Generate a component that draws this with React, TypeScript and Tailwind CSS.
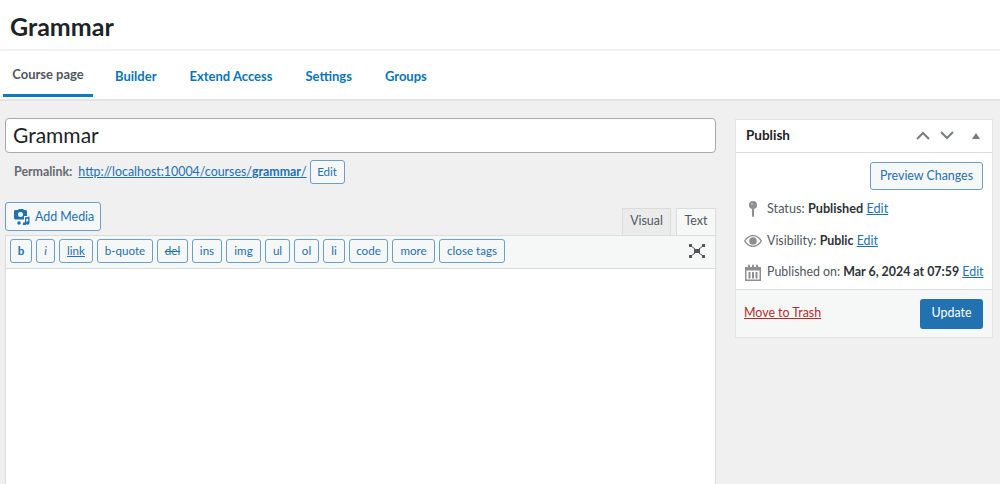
import React from "react";

const quicktags = [
  { label: "b", cls: "font-bold w-[22px]" },
  { label: "i", cls: "italic w-[19px]" },
  { label: "link", cls: "underline w-[34px]" },
  { label: "b-quote", cls: "w-[56px]" },
  { label: "del", cls: "line-through w-[31px]" },
  { label: "ins", cls: "w-[30px]" },
  { label: "img", cls: "w-[35px]" },
  { label: "ul", cls: "w-[25px]" },
  { label: "ol", cls: "w-[25px]" },
  { label: "li", cls: "w-[22px]" },
  { label: "code", cls: "w-[39px]" },
  { label: "more", cls: "w-[43px]" },
  { label: "close tags", cls: "w-[66px]" },
];

const tabs = ["Builder", "Extend Access", "Settings", "Groups"];

function PinIcon() {
  return (
    <svg width="14" height="18" viewBox="0 0 14 18" className="text-[#8c8f94]" fill="currentColor">
      <circle cx="7" cy="5" r="4" />
      <rect x="6" y="8" width="2" height="9" rx="1" />
      <circle cx="6" cy="4" r="1" fill="#c3c4c7" />
    </svg>
  );
}

function EyeIcon() {
  return (
    <svg width="18" height="12" viewBox="0 0 18 12" className="text-[#8c8f94]" fill="currentColor">
      <path d="M9 0C5 0 2 2.500 0 6c2 3.500 5 6 9 6s7-2.500 9-6c-2-3.500-5-6-9-6zm0 10.700C6 10.700 3.400 8.900 1.500 6 3.400 3.100 6 1.300 9 1.300s5.600 1.800 7.500 4.700C14.600 8.900 12 10.700 9 10.700z" fillRule="evenodd" />
      <circle cx="9" cy="6" r="3.800" />
    </svg>
  );
}

function CalendarIcon() {
  return (
    <svg width="16" height="17" viewBox="0 0 16 17" className="shrink-0 text-[#8c8f94]" fill="currentColor">
      <path d="M0 3h16v14H0zM1.500 6.500v9h13v-9z" fillRule="evenodd" />
      <rect x="3" y="0.500" width="2" height="4" rx="1" />
      <rect x="7" y="0.500" width="2" height="4" rx="1" />
      <rect x="11" y="0.500" width="2" height="4" rx="1" />
      <rect x="3.500" y="8" width="2" height="6.500" />
      <rect x="7" y="8" width="2" height="6.500" />
      <rect x="10.500" y="8" width="2" height="6.500" />
    </svg>
  );
}

function MediaIcon() {
  return (
    <svg width="16" height="16" viewBox="0 0 16 16" className="shrink-0" fill="#2271b1">
      <path d="M2 1h2l1-1h4l1 1h1.500A1.500 1.500 0 0 1 13 2.500V7h-3v3.500H1.500A1.500 1.500 0 0 1 0 9V2.500A1.500 1.500 0 0 1 2 1zm4.500 2a2.500 2.500 0 1 0 0 5 2.500 2.500 0 0 0 0-5z" fillRule="evenodd" />
      <path d="M11 8.500l4.500-1V14a1.700 1.700 0 1 1-1.300-1.600V9.400l-2 .5V15a1.700 1.700 0 1 1-1.200-1.600z" />
      <circle cx="5" cy="14" r="1.800" />
    </svg>
  );
}

function FullscreenIcon() {
  return (
    <svg width="16" height="14" viewBox="0 0 16 14" fill="#50575e">
      <rect x="5" y="5" width="6" height="4" />
      <path d="M2 2l4 3M14 2l-4 3M2 12l4-3M14 12l-4-3" stroke="#50575e" strokeWidth="1" fill="none" />
      <rect x="0" y="0" width="3" height="3" />
      <rect x="13" y="0" width="3" height="3" />
      <rect x="0" y="11" width="3" height="3" />
      <rect x="13" y="11" width="3" height="3" />
    </svg>
  );
}

export default function App() {
  return (
    <div className="h-[484px] overflow-hidden bg-[#f0f0f1] text-[#50575e] text-[12.400px] font-['Lato',sans-serif]">
      {/* Header */}
      <div className="bg-white border-b-2 border-[#e4e4e6] h-[101px] flex flex-col">
        <div className="h-[51px] pl-[10px] flex items-center border-b-2 border-[#f2f2f2]">
          <h1 className="text-[25px] font-bold text-[#1d2327] leading-none pt-[3px]">Grammar</h1>
        </div>
        <nav className="flex flex-1 font-bold text-[13px] text-[#0a75b8]">
          <div className="w-[90px] ml-[3px] h-[46px] pt-[5px] flex items-center justify-center border-b-[3px] border-[#0a7cc0] text-[#50575e]">
            Course page
          </div>
          <div className="flex gap-[33px] ml-[22px] h-[46px] pt-[5px] items-center">
            {tabs.map((t) => (
              <span key={t}>{t}</span>
            ))}
          </div>
        </nav>
      </div>

      <div className="flex pl-[5px] pr-[7px] pt-[17px] gap-[19px]">
        {/* Left column */}
        <div className="w-[711px]">
          <div className="h-[35px] bg-white border border-[#a7aaad] rounded flex items-center px-[7px] pb-px text-[21px] text-[#1d2327]">
            Grammar
          </div>
          <div className="flex items-center h-[26px] mt-[6px] pl-[9px]">
            <b className="text-[#646970] mr-[6px]">Permalink:</b>
            <a className="underline text-[#2271b1]">
              http://localhost:10004/courses/<b>grammar</b>/
            </a>
            <span className="ml-[3px] h-[24px] w-[35px] flex items-center justify-center border border-[#6a9fc9] rounded-[3px] bg-[#f6f7f7] text-[#2271b1] text-[11.500px]">
              Edit
            </span>
          </div>

          <div className="flex items-end justify-between mt-[17px]">
            <button className="flex items-center gap-[5px] h-[29px] w-[96px] pl-[8px] pt-px mb-[4px] whitespace-nowrap border border-[#6a9fc9] rounded-[3px] bg-[#f6f7f7] text-[#2271b1]">
              <MediaIcon />
              Add Media
            </button>
            <div className="flex gap-[5px] text-[#50575e]">
              <span className="w-[49px] h-[27px] pb-[2px] flex items-center justify-center bg-[#ebebec] border border-[#dcdcde] border-b-0">Visual</span>
              <span className="w-[40px] h-[27px] pb-[2px] flex items-center justify-center bg-[#f6f7f7] border border-[#dcdcde] border-b-0">Text</span>
            </div>
          </div>

          <div className="border border-[#dcdcde] bg-white h-[300px]">
            <div className="h-[33px] bg-[#f6f7f7] border-b border-[#dcdcde] flex items-start pt-[3px] pl-[4px] pr-[10px]">
              <div className="flex gap-[4px]">
                {quicktags.map((q) => (
                  <span
                    key={q.label}
                    className={`h-[24px] flex items-center justify-center border border-[#6a9fc9] rounded-[3px] bg-[#f6f7f7] text-[#2271b1] text-[11.600px] ${q.cls}`}
                  >
                    {q.label}
                  </span>
                ))}
              </div>
              <div className="ml-auto pt-[5px]">
                <FullscreenIcon />
              </div>
            </div>
          </div>
        </div>

        {/* Publish box */}
        <div className="w-[258px] h-[219px] mt-px bg-white border border-[#e4e4e6] flex flex-col">
          <div className="h-[33px] pb-px flex items-center pl-[10px] pr-[12px] border-b border-[#dcdcde]">
            <span className="font-bold text-[#1d2327] text-[13.500px]">Publish</span>
            <svg width="14" height="9" viewBox="0 0 14 9" className="ml-auto" fill="none" stroke="#787c82" strokeWidth="2">
              <path d="M1 8l6-6 6 6" />
            </svg>
            <svg width="14" height="9" viewBox="0 0 14 9" className="ml-[10px]" fill="none" stroke="#787c82" strokeWidth="2">
              <path d="M1 1l6 6 6-6" />
            </svg>
            <svg width="8" height="6" viewBox="0 0 8 6" className="ml-[18px]" fill="#787c82">
              <path d="M4 0l4 6H0z" />
            </svg>
          </div>
          <div className="flex-1">
            <div className="flex justify-end pt-[9px] pr-[9px]">
              <span className="w-[113px] h-[28px] flex items-center justify-center border border-[#6a9fc9] rounded-[3px] bg-[#f6f7f7] text-[#2271b1]">
                Preview Changes
              </span>
            </div>
            <div className="mt-[3px] flex flex-col">
              <div className="h-[32px] flex items-center">
                <span className="w-[31px] pl-[2px] flex justify-center"><PinIcon /></span>
                <span className="text-[12.700px]">Status: <b className="text-[#2c3338]">Published</b> <a className="underline text-[#2271b1]">Edit</a></span>
              </div>
              <div className="h-[32px] flex items-center">
                <span className="w-[31px] pl-[2px] flex justify-center"><EyeIcon /></span>
                <span>Visibility: <b className="text-[#2c3338]">Public</b> <a className="underline text-[#2271b1]">Edit</a></span>
              </div>
              <div className="h-[30px] flex items-center">
                <span className="w-[31px] pl-[2px] flex justify-center"><CalendarIcon /></span>
                <span className="whitespace-nowrap">Published on: <b className="text-[#2c3338]">Mar 6, 2024 at 07:59</b> <a className="underline text-[#2271b1]">Edit</a></span>
              </div>
            </div>
          </div>
          <div className="h-[48px] bg-[#f6f7f7] border-t border-[#dcdcde] flex items-center justify-between pl-[8px] pr-[9px]">
            <a className="underline text-[#b32d2e]">Move to Trash</a>
            <span className="w-[63px] h-[30px] flex items-center justify-center rounded-[3px] bg-[#2271b1] text-white">Update</span>
          </div>
        </div>
      </div>
    </div>
  );
}
